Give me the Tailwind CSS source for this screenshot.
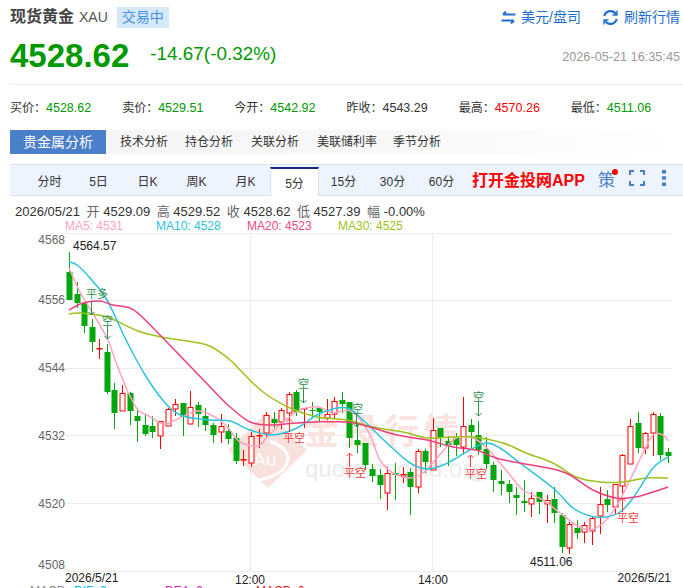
<!DOCTYPE html>
<html lang="zh-CN">
<head>
  <meta charset="UTF-8"/>
  <title>现货黄金 XAU</title>
  <script src="https://cdn.jsdelivr.net/npm/@tailwindcss/browser@4"></script>
</head>
<body class="bg-white text-[#333] font-['Liberation_Sans','Noto_Sans_CJK_SC',sans-serif] overflow-hidden">
<div class="w-[683px] h-[588px] overflow-hidden">

  <!-- Title row -->
  <div class="flex items-center h-[34px] pl-[10px] pr-[3px]">
    <span class="text-[16px] font-bold text-[#444]">现货黄金</span>
    <span class="ml-[5px] text-[14px] text-[#555]">XAU</span>
    <span class="ml-[9px] h-[21px] w-[52px] flex items-center justify-center bg-[#d6e9fb] text-[14px] text-[#4a90e2]">交易中</span>
    <div class="ml-auto flex items-center text-[14px] text-[#1f6fd0]">
      <svg class="w-[15px] h-[13px]" viewBox="0 0 15 13" fill="none" stroke="#1f6fd0" stroke-width="2">
        <path d="M14.5 3.5H2M5 .5 2 3.5"/>
        <path d="M.5 9.5H13M10 12.5l3-3"/>
      </svg>
      <span class="ml-[5px]">美元/盘司</span>
      <svg class="ml-[21px] w-[17px] h-[17px]" viewBox="0 0 17 17" fill="none" stroke="#1f6fd0" stroke-width="2.2">
        <path d="M2.3 7A6.4 6.4 0 0 1 14 5.2"/>
        <path d="M14.7 10A6.4 6.4 0 0 1 3 11.8"/>
        <path d="M15 1.5v4.5h-4.5" stroke-width="1.4"/>
        <path d="M2 15.5V11h4.5" stroke-width="1.4"/>
      </svg>
      <span class="ml-[5px]">刷新行情</span>
    </div>
  </div>

  <!-- Price row -->
  <div class="flex items-center h-[42px] pl-[10px] pr-[3px]">
    <span class="text-[33px] leading-none font-bold text-[#009900]">4528.62</span>
    <span class="ml-[21px] text-[18.9px] leading-none text-[#009900] -mt-[2px]">-14.67(-0.32%)</span>
    <span class="ml-auto text-[12.7px] text-[#999] mt-[5px]">2026-05-21 16:35:45</span>
  </div>

  <!-- Quote stats -->
  <div class="ml-[10px] mt-[8px] h-[46px] pt-[2px] border-t border-[#eee] grid grid-cols-6 items-center text-[12px] w-[673px]">
    <div><span>买价：</span><span class="text-[12.5px] text-[#009900]">4528.62</span></div>
    <div><span>卖价：</span><span class="text-[12.5px] text-[#009900]">4529.51</span></div>
    <div><span>今开：</span><span class="text-[12.5px] text-[#009900]">4542.92</span></div>
    <div><span>昨收：</span><span class="text-[12.5px] text-[#333]">4543.29</span></div>
    <div><span>最高：</span><span class="text-[12.5px] text-[#ff0000]">4570.26</span></div>
    <div><span>最低：</span><span class="text-[12.5px] text-[#009900]">4511.06</span></div>
  </div>

  <!-- Analysis tabs -->
  <div class="ml-[10px] h-[24px] flex items-center text-[12px] bg-linear-to-r from-[#f6f6f6] via-[#f7f7f7] to-white">
    <span class="h-full w-[96px] flex items-center justify-center bg-[#4a7fc9] text-white text-[14px]">贵金属分析</span>
    <span class="ml-[14px]">技术分析</span>
    <span class="ml-[17px]">持仓分析</span>
    <span class="ml-[18px]">关联分析</span>
    <span class="ml-[18px]">美联储利率</span>
    <span class="ml-[16px]">季节分析</span>
  </div>

  <!-- Period tabs -->
  <div class="ml-[10px] mt-[10px] h-[32px] flex border-y border-[#d8e2f1] bg-[#edf4fd] text-[12px] items-end">
    <div class="w-[15px]"></div>
    <span class="w-[49px] h-[30px] pt-[4px] flex items-center justify-center">分时</span>
    <span class="w-[49px] h-[30px] pt-[4px] flex items-center justify-center">5日</span>
    <span class="w-[49px] h-[30px] pt-[4px] flex items-center justify-center">日K</span>
    <span class="w-[49px] h-[30px] pt-[4px] flex items-center justify-center">周K</span>
    <span class="w-[49px] h-[30px] pt-[4px] flex items-center justify-center">月K</span>
    <span class="w-[49px] h-[29px] -mb-px flex items-center justify-center bg-white border-t-2 border-x border-t-[#142c7e] border-x-[#d8e2f1] pt-[2px]">5分</span>
    <span class="w-[49px] h-[30px] pt-[4px] flex items-center justify-center">15分</span>
    <span class="w-[49px] h-[30px] pt-[4px] flex items-center justify-center">30分</span>
    <span class="w-[49px] h-[30px] pt-[4px] flex items-center justify-center">60分</span>
    <span class="ml-[6px] h-[30px] pt-[2px] flex items-center text-[16px] font-bold text-[#ff0000] whitespace-nowrap">打开金投网APP</span>
    <span class="relative ml-[13px] h-[30px] pt-[2px] flex items-center text-[17px] text-[#4a7fc9]">策<i class="absolute -right-[3px] top-[4px] w-[6px] h-[6px] rounded-full bg-[#ff0000]"></i></span>
    <svg class="ml-[14px] mb-[9px] w-[16px] h-[16px]" viewBox="0 0 16 16" fill="none" stroke="#4a7fc9" stroke-width="2">
      <path d="M5 1H1v4M11 1h4v4M5 15H1v-4M11 15h4v-4"/>
    </svg>
    <svg class="ml-[17px] mb-[9px] w-[4px] h-[16px]" viewBox="0 0 4 16" fill="#4a7fc9">
      <rect x="0" y="0" width="4" height="3.5"/><rect x="0" y="6.2" width="4" height="3.5"/><rect x="0" y="12.5" width="4" height="3.5"/>
    </svg>
  </div>

  <!-- OHLC line -->
  <div class="mt-[7px] h-[16px] pl-[15px] flex items-center gap-[6.5px] text-[13px] leading-none whitespace-nowrap">
    <span>2026/05/21</span>
    <span><span class="text-[#666]">开</span> 4529.09</span>
    <span><span class="text-[#666]">高</span> 4529.52</span>
    <span><span class="text-[#666]">收</span> 4528.62</span>
    <span><span class="text-[#666]">低</span> 4527.39</span>
    <span><span class="text-[#666]">幅</span> -0.00%</span>
  </div>

  <!-- MA legend -->
  <div class="h-[13px] pl-[65px] flex items-center text-[12px] leading-none whitespace-nowrap">
    <span class="w-[91px] text-[#ffa4c0]">MA5: 4531</span>
    <span class="w-[91px] text-[#2cc3dc]">MA10: 4528</span>
    <span class="w-[91px] text-[#ee4a80]">MA20: 4523</span>
    <span class="w-[91px] text-[#9cc31c]">MA30: 4525</span>
  </div>

  <!-- K-line chart, viewBox uses page coordinates -->
  <svg id="chart" class="block w-[683px] h-[356px]" viewBox="0 232 683 356"
       font-family="'Liberation Sans','Noto Sans CJK SC',sans-serif" font-size="12">
    <g stroke="#ececec" fill="none">
      <path d="M65 233.5H672M65 300.5H672M65 368.5H672M65 435.5H672M65 503.5H672M65 571.5H672"/>
      <path d="M250.5 233V571M432.5 233V571"/>
    </g>

    <!-- Watermark -->
    <g>
      <path d="M267 412 307 450 268 488 228 450Z" fill="#f9e1dd"/>
      <path d="M270 441Q292 450 287 463T258 480" fill="none" stroke="#fff" stroke-width="3"/>
      <text x="253" y="466" font-size="19" fill="#fff">Au</text>
      <text x="304" y="444" font-size="35" letter-spacing="5" fill="#f9e4e0" font-weight="bold">金投行情</text>
      <text x="305" y="477" font-size="24" fill="#ececec">quote.cngold.org</text>
    </g>

    <g id="candles"></g>
    <g id="lines" fill="none" stroke-width="1.5"></g>
    <g id="signals"></g>

    <g fill="#666" text-anchor="end">
      <text x="65" y="244">4568</text>
      <text x="65" y="304">4556</text>
      <text x="65" y="372">4544</text>
      <text x="65" y="440">4532</text>
      <text x="65" y="508">4520</text>
      <text x="65" y="569">4508</text>
    </g>
    <text x="73" y="250" fill="#222">4564.57</text>
    <text x="530" y="566" fill="#222">4511.06</text>
    <g fill="#222">
      <text x="65" y="582">2026/5/21</text>
      <text x="250" y="584" text-anchor="middle">12:00</text>
      <text x="433" y="584" text-anchor="middle">14:00</text>
      <text x="671" y="582" text-anchor="end">2026/5/21</text>
    </g>
    <text x="30" y="595" fill="#888">MACD</text>
    <text x="74" y="595" fill="#00bfe8">DIF: 0</text>
    <text x="165" y="595" fill="#e020c0">DEA: 0</text>
    <text x="256" y="595" fill="#e02020">MACD: 0</text>
  </svg>
</div>

<script>
  // high, body top, body bottom, low, isRed
  const bars = [
    [252,272,300,300,0],[282,294,303,308,0],[302,303,326,333,0],[319,327,342,352,0],[339,348,349,359,1],
    [344,352,392,394,0],[383,390,413,429,0],[385,393,411,411,1],[392,393,411,425,0],[408,416,421,442,0],
    [415,425,434,436,0],[416,426,432,438,0],[421,421,436,449,1],[408,409,426,426,1],[399,404,409,416,1],
    [403,403,417,436,0],[391,407,424,424,1],[402,405,414,427,0],[408,416,425,431,0],[423,425,435,443,0],
    [414,426,432,443,1],[424,431,439,444,0],[433,438,461,464,0],[450,459,460,466,1],[432,436,463,467,1],
    [429,435,436,448,1],[412,415,433,438,1],[412,419,423,428,0],[408,410,422,429,1],[392,394,413,420,1],
    [390,392,412,416,0],[408,408,409,428,1],[402,410,411,417,0],[407,408,412,422,0],[399,414,418,420,1],
    [397,401,414,419,1],[392,400,404,413,0],[402,402,438,448,0],[423,440,445,453,0],[443,443,465,470,0],
    [464,469,476,482,0],[469,475,485,499,0],[467,473,493,510,1],[463,473,475,500,0],[467,474,476,483,1],
    [468,472,487,515,0],[449,451,487,493,1],[449,451,462,473,0],[418,430,470,470,1],[428,428,438,447,0],
    [436,441,445,466,0],[433,438,445,456,0],[397,426,447,453,1],[419,425,432,448,0],[421,435,450,455,0],
    [437,449,464,469,0],[462,465,480,492,0],[470,481,484,495,0],[480,484,492,503,0],[487,495,498,515,0],
    [480,501,503,512,0],[492,498,504,517,1],[492,492,502,514,0],[495,500,504,523,1],[487,499,513,523,0],
    [513,515,547,553,0],[522,524,548,554,1],[520,528,533,539,0],[522,525,532,543,1],[517,518,531,545,1],
    [487,504,516,534,1],[490,499,505,512,0],[484,484,507,515,1],[454,455,486,493,1],[419,426,464,464,1],
    [412,423,448,453,0],[432,433,448,454,1],[412,414,433,456,1],[413,416,455,460,0],[448,452,456,463,0]
  ]

  const lines = {
    '#ffa4c0': [[69,268],[80,292],[92,312],[107,338],[117,365],[128,392],[138,410],[147,415],[163,424],[173,421],[197,411],[213,416],[222,422],[230,430],[240,442],[258,446],[267,437],[283,422],[300,410],[318,407],[333,413],[347,410],[358,417],[370,435],[380,460],[393,473],[410,478],[423,473],[437,458],[453,440],[463,437],[473,438],[486,447],[500,463],[510,475],[523,490],[543,500],[560,513],[576,525],[590,530],[603,523],[616,507],[630,480],[643,453],[653,435],[663,435],[668,441]],
    '#9cc31c': [[69,314],[80,313],[107,317],[138,331],[167,338],[207,345],[230,360],[240,370],[263,392],[290,408],[317,417],[347,420],[373,427],[403,432],[427,438],[453,437],[473,437],[503,443],[526,453],[553,463],[576,477],[600,482],[623,482],[646,478],[668,478]],
    '#2cc3dc': [[69,262],[77,265],[90,278],[107,300],[127,342],[147,378],[167,405],[183,416],[210,420],[230,421],[250,430],[273,435],[297,428],[317,415],[337,408],[350,409],[363,420],[387,443],[410,463],[427,469],[443,465],[453,460],[470,450],[486,443],[500,448],[520,463],[553,488],[573,508],[590,516],[606,517],[620,512],[633,498],[653,468],[668,457]],
    '#ee3f7c': [[69,310],[83,303],[100,301],[113,305],[130,308],[140,315],[160,335],[187,363],[213,390],[230,407],[250,422],[270,425],[297,423],[317,422],[347,422],[370,427],[397,435],[427,440],[453,447],[476,450],[496,458],[520,463],[553,469],[570,475],[593,490],[616,498],[636,497],[653,492],[668,487]]
  }

  // [label, text x, text y, arrow x, arrow y1, arrow y2, isUp]
  const signals = [
    ['平多',86,298,91.5,301,315,0],['空',102,325,107.5,326,339,0],['空',298,388,303.5,389,403,0],
    ['空',352,413,356.5,414,427,0],['空',473,401,478.5,402,416,0],
    ['平空',283,442,289.5,432,419,1],['平空',344,477,349.5,467,453,1],['平空',465,478,470.5,467,455,1],['平空',617,522,622.5,512,498,1]
  ]

  const NS = 'http://www.w3.org/2000/svg'
  function add(parent, tag, attrs, text) {
    const el = document.createElementNS(NS, tag)
    for (const k in attrs) el.setAttribute(k, attrs[k])
    if (text) el.textContent = text
    parent.appendChild(el)
  }

  const candles = document.getElementById('candles')
  bars.forEach((b, i) => {
    const x = Math.round(69 + i * 7.58) + 0.5
    const color = b[4] ? '#ff0000' : '#00a60c'
    add(candles, 'path', { d: `M${x} ${b[0]}V${b[3]}`, stroke: color })
    if (b[4]) {
      add(candles, 'rect', { x: x - 2.5, y: b[1] + 0.5, width: 5, height: Math.max(b[2] - b[1] - 0.5, 0.5), fill: '#fff', stroke: color })
    } else {
      add(candles, 'rect', { x: x - 3, y: b[1], width: 6, height: b[2] - b[1], fill: color })
    }
  })

  // Catmull-Rom through the points, for smooth MA curves
  function smooth(pts) {
    let d = `M${pts[0][0]} ${pts[0][1]}`
    for (let i = 0; i < pts.length - 1; i++) {
      const p0 = pts[i - 1] || pts[i], p1 = pts[i], p2 = pts[i + 1], p3 = pts[i + 2] || p2
      d += `C${p1[0] + (p2[0] - p0[0]) / 6} ${p1[1] + (p2[1] - p0[1]) / 6} ${p2[0] - (p3[0] - p1[0]) / 6} ${p2[1] - (p3[1] - p1[1]) / 6} ${p2[0]} ${p2[1]}`
    }
    return d
  }
  const linesG = document.getElementById('lines')
  for (const color in lines) add(linesG, 'path', { d: smooth(lines[color]), stroke: color })

  const signalsG = document.getElementById('signals')
  signals.forEach(([label, tx, ty, ax, y1, y2, up]) => {
    const color = up ? '#f23a3a' : '#2c8f4a'
    add(signalsG, 'text', { x: tx, y: ty, fill: color, 'font-size': 11 }, label)
    const tip = up ? 3 : -3
    add(signalsG, 'path', { d: `M${ax} ${y1}V${y2}M${ax - 3} ${y2 + tip}L${ax} ${y2}L${ax + 3} ${y2 + tip}`, stroke: color, fill: 'none' })
  })
</script>
</body>
</html>
